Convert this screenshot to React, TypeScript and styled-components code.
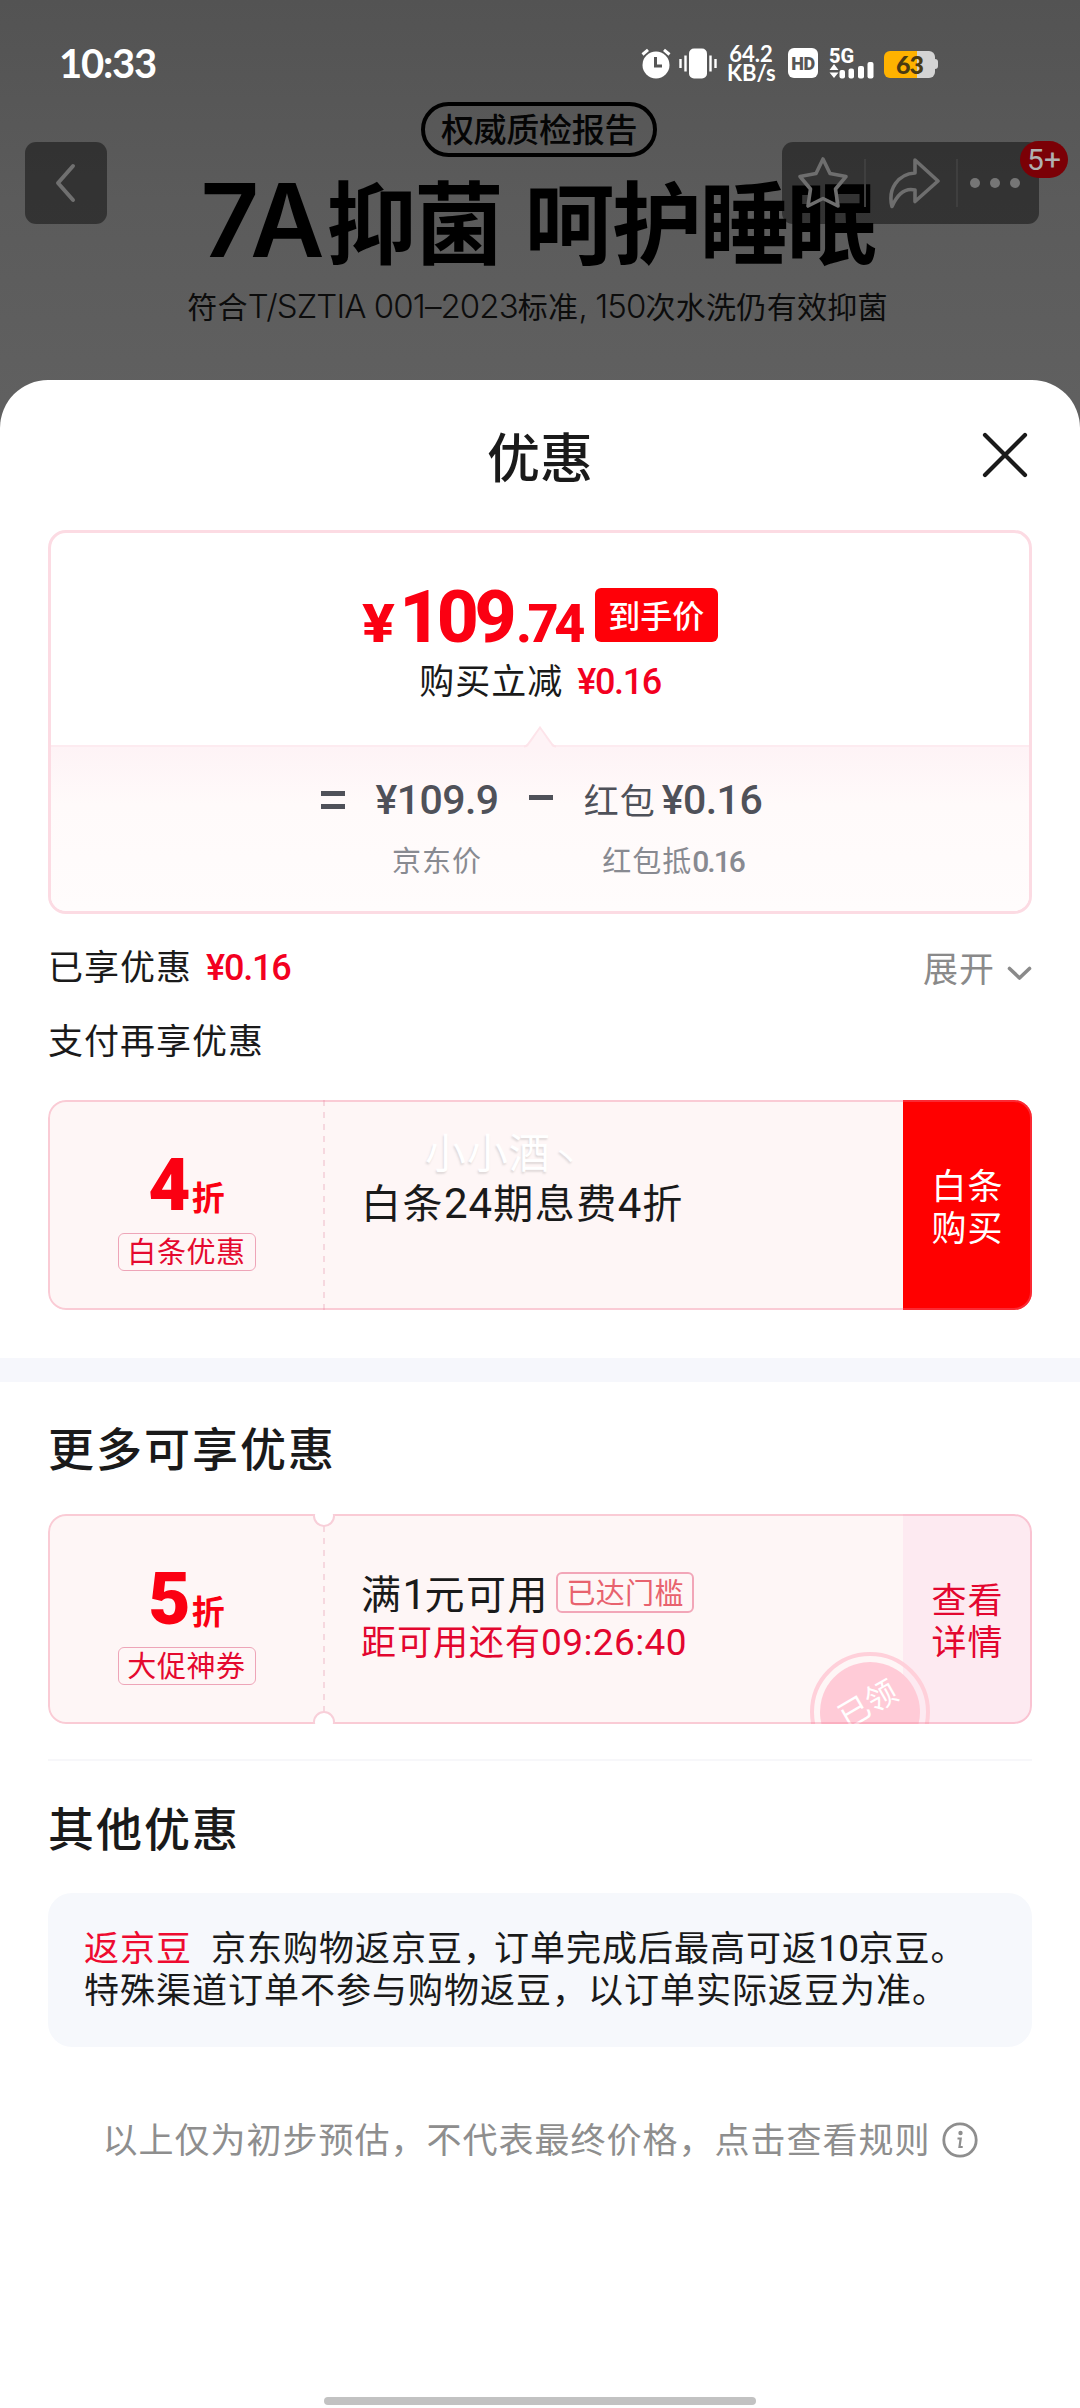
import React from "react";
import styled, { createGlobalStyle, css } from "styled-components";

const CJK = `"Noto Sans CJK SC", "Noto Sans", sans-serif`;

const Global = createGlobalStyle`
  *, *::before, *::after { box-sizing: border-box; }
  html, body { margin: 0; padding: 0; background: #ffffff; }
  body { font-family: ${CJK}; color: #1a1a1a; }
`;

const Page = styled.div`
  width: 1080px;
  height: 2408px;
  display: flex;
  flex-direction: column;
  overflow: hidden;
  background: linear-gradient(#535353 0, #5b5b5b 200px, #606060 400px);
`;

/* Latin digits mixed into Chinese copy */
const Num = styled.span<{ $w?: number; $ls?: number; $size?: number }>`
  font-family: Roboto, ${CJK};
  line-height: 0;
  font-weight: ${(p) => p.$w ?? "inherit"};
  letter-spacing: ${(p) => p.$ls ?? 0}px;
  ${(p) => p.$size && css`font-size: ${p.$size}px;`}
`;

/* ---------- hero ---------- */

const Hero = styled.header`
  position: relative;
  flex: none;
  height: 380px;
  display: flex;
  flex-direction: column;
  align-items: center;
`;

const StatusBar = styled.div`
  align-self: stretch;
  height: 102px;
  padding: 24px 142px 0 59px;
  display: flex;
  align-items: center;
  justify-content: space-between;
  color: #fff;
`;

const Clock = styled.div`
  font: 700 40px/78px Lato, sans-serif;
  letter-spacing: -1.2px;
`;

const StatusIcons = styled.div`
  display: flex;
  align-items: center;
`;

const NetSpeed = styled.div`
  width: 48px;
  margin: 0 13px 0 10px;
  font: 700 22px/19px Lato, sans-serif;
  text-align: center;
  white-space: nowrap;
`;

const HdBadge = styled.div`
  width: 30px;
  height: 30px;
  margin-right: 11px;
  border-radius: 6px;
  background: #fff;
  color: #565656;
  font: 900 18px/31px Roboto, sans-serif;
  letter-spacing: -0.5px;
  text-align: center;
`;

const Battery = styled.div`
  width: 51px;
  height: 27px;
  margin-left: 9px;
  margin-right: 3px;
  margin-top: 3px;
  position: relative;
  border-radius: 6px;
  background: linear-gradient(90deg, #ffb200 64%, #d4d4d4 64%);
  color: #4a3a12;
  font: 900 25px/27px Lato, sans-serif;
  letter-spacing: -1px;
  text-align: center;
  &::after {
    content: "";
    position: absolute;
    right: -3px;
    top: 8px;
    width: 4px;
    height: 10px;
    border-radius: 0 3px 3px 0;
    background: #d4d4d4;
  }
`;

const ReportPill = styled.div`
  width: 236px;
  height: 55px;
  margin-right: 2px;
  border: 4px solid #000;
  border-radius: 28px;
  color: #050505;
  font-size: 33px;
  font-weight: 500;
  line-height: 44px;
  letter-spacing: -0.3px;
  text-align: center;
`;

const HeroTitle = styled.h1`
  margin: 11px 5px 0 0;
  color: #000;
  font-size: 90px;
  line-height: 100px;
  font-weight: 700;
  letter-spacing: -2.5px;
  word-spacing: 5px;
  white-space: nowrap;
`;

const HeroLatin = styled.span<{ $size: number; $w: number; $ls: number }>`
  font-family: Inter, sans-serif;
  font-size: ${(p) => p.$size}px;
  font-weight: ${(p) => p.$w};
  letter-spacing: ${(p) => p.$ls}px;
  line-height: 0;
`;

const HeroNote = styled.p`
  margin: 17px 5px 0 0;
  color: #0c0c0c;
  font-size: 30px;
  line-height: 40px;
  letter-spacing: 0.3px;
  white-space: nowrap;
`;

const NavOverlay = styled.nav`
  position: absolute;
  left: 25px;
  right: 41px;
  top: 142px;
  display: flex;
  justify-content: space-between;
`;

const NavBox = styled.div<{ $wide?: boolean }>`
  position: relative;
  width: ${(p) => (p.$wide ? 257 : 82)}px;
  height: 82px;
  border-radius: 11px;
  background: rgba(0, 0, 0, 0.43);
  display: flex;
  align-items: center;
  justify-content: ${(p) => (p.$wide ? "flex-start" : "center")};
  padding-left: ${(p) => (p.$wide ? 14 : 0)}px;
`;

const NavSplit = styled.i<{ $l: number; $r: number }>`
  width: 2px;
  height: 48px;
  margin: 0 ${(p) => p.$r}px 0 ${(p) => p.$l}px;
  background: #3f3f3f;
`;

const CountBadge = styled.span`
  position: absolute;
  right: -29px;
  top: -1px;
  width: 48px;
  height: 37px;
  border-radius: 19px;
  background: #7b0006;
  color: #b0b0b0;
  font: 400 30px/38px Roboto, sans-serif;
  text-align: center;
`;

/* ---------- sheet ---------- */

const Sheet = styled.main`
  position: relative;
  flex: 1;
  border-radius: 48px 48px 0 0;
  background: #fff;
  display: flex;
  flex-direction: column;
`;

const SheetHeader = styled.div`
  height: 150px;
  padding: 0 51px;
  display: grid;
  grid-template-columns: 48px 1fr 48px;
  align-items: center;
  flex: none;
`;

const SheetTitle = styled.h2`
  grid-column: 2;
  margin: 0;
  font-size: 53px;
  font-weight: 500;
  line-height: 149px;
  text-align: center;
`;

const Section = styled.section`
  padding: 0 48px;
  display: flex;
  flex-direction: column;
`;

const PriceCard = styled.div`
  height: 384px;
  border: 3px solid #fcdbe3;
  border-radius: 18px;
  overflow: hidden;
  display: flex;
  flex-direction: column;
`;

const PriceTop = styled.div`
  height: 212px;
  padding-top: 49px;
  display: flex;
  flex-direction: column;
  align-items: center;
`;

const PriceRow = styled.div`
  height: 70px;
  display: flex;
  align-items: baseline;
  color: #fb0012;
  font-family: Roboto, sans-serif;
  font-weight: 800;
  line-height: 70px;
`;

const PricePart = styled.span<{ $size: number; $ls?: number; $ml?: number; $stretch?: number }>`
  font-size: ${(p) => p.$size}px;
  letter-spacing: ${(p) => p.$ls ?? 0}px;
  margin-left: ${(p) => p.$ml ?? 0}px;
  transform: scaleX(${(p) => p.$stretch ?? 1});
  transform-origin: 0 50%;
`;

const FinalTag = styled.span`
  align-self: flex-start;
  width: 123px;
  height: 54px;
  margin: 6px 0 0 14px;
  border-radius: 6px;
  background: #ff0008;
  color: #fff;
  font-family: ${CJK};
  font-size: 32px;
  font-weight: 500;
  line-height: 53px;
  text-align: center;
`;

const SaveLine = styled.div`
  margin-top: 5px;
  font-size: 35px;
  line-height: 44px;
  letter-spacing: 1px;
  white-space: nowrap;
`;

const RedAmount = styled(Num)`
  color: #f3001f;
  margin-left: 14px;
`;

const Breakdown = styled.div`
  position: relative;
  flex: 1;
  border-top: 2px solid #fdebf0;
  background: linear-gradient(#fef3f6, #fffafa 35%, #fffcfc);
  padding: 27px 0 0 270px;
  display: grid;
  grid-template-columns: 24px 122px 24px 178px;
  column-gap: 31px;
  align-content: start;
`;

const Notch = styled.svg`
  position: absolute;
  left: 469px;
  top: -22px;
`;

const Operator = styled.div<{ $minus?: boolean }>`
  height: ${(p) => (p.$minus ? 5 : 18)}px;
  margin-top: ${(p) => (p.$minus ? 21 : 17)}px;
  border: solid #4f5159;
  border-width: ${(p) => (p.$minus ? "5px 0 0" : "5px 0")};
`;

const Term = styled.div`
  padding-top: 3px;
  display: flex;
  flex-direction: column;
  align-items: center;
  white-space: nowrap;
  color: #4f5159;
`;

const TermValue = styled.div`
  font-size: 35px;
  line-height: 44px;
  letter-spacing: 1px;
  word-spacing: -3px;
`;

const TermLabel = styled.div`
  margin-top: 20px;
  color: #888a91;
  font-size: 29px;
  line-height: 36px;
  letter-spacing: 1px;
`;

const Line = styled.div<{ $mt: number }>`
  margin-top: ${(p) => p.$mt}px;
  height: 50px;
  display: flex;
  justify-content: space-between;
  font-size: 35px;
  line-height: 50px;
  letter-spacing: 1px;
`;

const Expand = styled.div`
  display: flex;
  color: #8a8a8a;
  line-height: 54px;
  svg { margin: 26px 0 0 12px; }
`;

const Heading = styled.h3<{ $mt: number }>`
  margin: ${(p) => p.$mt}px 0 0;
  font-size: 46px;
  font-weight: 500;
  line-height: 60px;
  letter-spacing: 2px;
`;

/* ---------- coupons ---------- */

const Coupon = styled.article<{ $mt: number }>`
  position: relative;
  height: 210px;
  margin-top: ${(p) => p.$mt}px;
  border-radius: 18px;
  overflow: hidden;
  background: #fef6f6;
  display: flex;
  &::after {
    content: "";
    position: absolute;
    inset: 0;
    border: 2px solid rgba(243, 120, 150, 0.34);
    border-radius: 18px;
  }
`;

const CouponValue = styled.div`
  width: 277px;
  padding-top: 55px;
  display: flex;
  flex-direction: column;
  align-items: center;
  background: repeating-linear-gradient(#f6d8df 0 6px, transparent 6px 12px) right / 2px 100% no-repeat;
`;

const Discount = styled.div`
  height: 60px;
  display: flex;
  align-items: baseline;
  color: #fb0012;
  font: 900 73px/60px Roboto, sans-serif;
`;

const DiscountUnit = styled.span`
  font: 700 33px/60px ${CJK};
  margin-left: 1px;
`;

const KindTag = styled.div`
  width: 138px;
  height: 38px;
  margin-top: 18px;
  border: 1px solid #eea5b8;
  border-radius: 6px;
  color: #e5092f;
  font-size: 29px;
  line-height: 32px;
  letter-spacing: 0.6px;
  text-align: center;
  white-space: nowrap;
`;

const CouponBody = styled.div`
  flex: 1;
  padding: 0 0 9px 36px;
  display: flex;
  flex-direction: column;
  justify-content: center;
`;

const CouponTitle = styled.div`
  display: flex;
  align-items: center;
  font-size: 40px;
  line-height: 50px;
  letter-spacing: 1.5px;
  white-space: nowrap;
`;

const Countdown = styled.div`
  color: #e3062f;
  font-size: 35px;
  line-height: 46px;
  letter-spacing: 1px;
  white-space: nowrap;
`;

const ReachedTag = styled.span`
  width: 138px;
  height: 41px;
  margin: 2px 0 0 7px;
  border: 2px solid #f2a6b8;
  border-radius: 6px;
  color: #e8626e;
  font-size: 29px;
  line-height: 34px;
  letter-spacing: 0.3px;
  text-align: center;
`;

const CouponAction = styled.button<{ $primary?: boolean }>`
  width: 129px;
  padding: 0 0 1px;
  border: 0;
  background: ${(p) => (p.$primary ? "#ff0000" : "#fdeaf1")};
  color: ${(p) => (p.$primary ? "#fff" : "#e3062f")};
  font-family: ${CJK};
  font-size: 35px;
  line-height: 42px;
  letter-spacing: 1px;
  text-align: center;
`;

const Punch = styled.i<{ $bottom?: boolean }>`
  position: absolute;
  z-index: 1;
  left: 265px;
  ${(p) => (p.$bottom ? "bottom" : "top")}: -9px;
  width: 22px;
  height: 22px;
  border: 2px solid #f8cfd9;
  border-radius: 50%;
  background: #fff;
`;

const Stamp = styled.div`
  position: absolute;
  left: 762px;
  top: 138px;
  width: 120px;
  height: 120px;
  padding: 6px;
  border: 4px solid #ffd0da;
  border-radius: 50%;
`;

const StampCore = styled.div`
  height: 100px;
  border-radius: 50%;
  background: #ffcbd7;
  color: #fff;
  font-size: 31px;
  line-height: 80px;
  text-indent: 4px;
  text-align: center;
  transform: rotate(-30deg);
`;

const Watermark = styled.span`
  position: absolute;
  left: 377px;
  top: 22px;
  color: #ffffff;
  font-size: 41px;
  line-height: 56px;
  letter-spacing: 1px;
  text-shadow: -1px 2px 2px rgba(120, 120, 120, 0.22);
`;

const WatermarkDot = styled.span`
  font-size: 30px;
`;

const Band = styled.div`
  height: 24px;
  margin: 48px 0 0;
  background: #f6f7fc;
`;

const Rule = styled.div`
  height: 2px;
  margin-top: 35px;
  background: #f7f7fa;
`;

const NoteBox = styled.div`
  height: 154px;
  margin-top: 37px;
  padding: 32px 36px 0;
  border-radius: 24px;
  background: #f6f8fc;
  font-size: 35px;
  line-height: 42px;
  letter-spacing: 1px;
  white-space: nowrap;
`;

const NoteKey = styled.span`
  color: #ee0b30;
  margin-right: 19px;
`;

const TightComma = styled.span`
  letter-spacing: -4px;
`;

const Disclaimer = styled.div`
  margin-top: 66px;
  height: 50px;
  display: flex;
  align-items: center;
  justify-content: center;
  color: #8e8e8e;
  font-size: 35px;
  line-height: 50px;
  letter-spacing: 1px;
  svg { margin: 4px 0 0 11px; }
`;

const HomeBar = styled.div`
  width: 432px;
  height: 8px;
  margin: auto auto 3px;
  border-radius: 4px;
  background: #c2c2c2;
`;

/* ---------- icons ---------- */

const AlarmSvg = styled.svg`
  margin-right: 8px;
`;

const AlarmIcon = () => (
  <AlarmSvg width="30" height="31" viewBox="0 0 30 31">
    <circle cx="15" cy="17" r="13.5" fill="#fff" />
    <path d="M1.5 6.5 7 1.8M28.500 6.500 23 1.800" stroke="#fff" strokeWidth="3" />
    <path d="M14.500 9v9h6.500" stroke="#565656" strokeWidth="3" fill="none" />
  </AlarmSvg>
);

const VibrateIcon = () => (
  <svg width="38" height="31" viewBox="0 0 38 31">
    <rect x="10" y="0.500" width="18" height="30" rx="5" fill="#fff" />
    <path d="M1.500 11v9M6.500 7.500v16M31.500 7.500v16M36.500 11v9" stroke="#fff" strokeWidth="2.400" />
  </svg>
);

const SignalIcon = () => (
  <svg width="46" height="31" viewBox="0 0 46 31">
    <text x="0" y="14.500" fill="#fff" fontFamily="Roboto, sans-serif" fontWeight="800" fontSize="20">5G</text>
    <path d="M0.500 22 5 16l4.500 6zM0.500 24.500 5 30l4.500-5.500z" fill="#fff" />
    <rect x="10.500" y="22" width="5.500" height="8.500" rx="2" fill="#fff" />
    <rect x="19.500" y="20.500" width="5.500" height="10" rx="2" fill="#fff" />
    <rect x="29" y="18" width="6" height="12.500" rx="2" fill="#fff" />
    <rect x="38.500" y="14" width="6" height="16.500" rx="2" fill="#fff" />
  </svg>
);

const BackIcon = () => (
  <svg width="22" height="42" viewBox="0 0 22 42" fill="none" stroke="#707070" strokeWidth="4" strokeLinecap="round" strokeLinejoin="round">
    <path d="M18 4 3 21l15 17" />
  </svg>
);

const StarIcon = () => (
  <svg width="54" height="54" viewBox="0 0 54 54" fill="none" stroke="#6e6e6e" strokeWidth="3.600" strokeLinejoin="round">
    <path d="M27 3 34 17.500 50 20.500 39.500 33 42 50 27 42.500 12 50 14.500 33 4 20.500 20 17.500Z" />
  </svg>
);

const ShareIcon = () => (
  <svg width="54" height="54" viewBox="0 0 54 54" fill="none" stroke="#6e6e6e" strokeWidth="3.600" strokeLinejoin="round">
    <path d="M28 4 51 25 28 45.500V34C18 31.500 11 37 5 50.500 0.500 33 11 18 28 17Z" />
  </svg>
);

const DotsIcon = () => (
  <svg width="52" height="12" viewBox="0 0 52 12" fill="#767676">
    <circle cx="6" cy="6" r="5" />
    <circle cx="26" cy="6" r="5" />
    <circle cx="46" cy="6" r="5" />
  </svg>
);

const CloseIcon = () => (
  <svg width="48" height="48" viewBox="0 0 48 48" stroke="#1a1a1a" strokeWidth="4.200" strokeLinecap="round">
    <path d="M4 4 44 44M44 4 4 44" />
  </svg>
);

const ChevronDown = () => (
  <svg width="25" height="15" viewBox="0 0 25 15" fill="none" stroke="#8a8a8a" strokeWidth="3.600" strokeLinecap="round" strokeLinejoin="round">
    <path d="M2.500 2.500 12.500 12 22.500 2.500" />
  </svg>
);

const InfoIcon = () => (
  <svg width="36" height="36" viewBox="0 0 36 36" fill="none" stroke="#8e8e8e">
    <circle cx="18" cy="18" r="16.200" strokeWidth="2.800" />
    <circle cx="18.500" cy="11" r="2.200" fill="#8e8e8e" stroke="none" />
    <path d="M15.500 16.500h3.200l-1.200 8.500h3.200" strokeWidth="2.200" />
  </svg>
);

export default function App() {
  return (
    <Page>
      <Global />
      <Hero>
        <StatusBar>
          <Clock>10:33</Clock>
          <StatusIcons>
            <AlarmIcon />
            <VibrateIcon />
            <NetSpeed>64.2<br />KB/s</NetSpeed>
            <HdBadge>HD</HdBadge>
            <SignalIcon />
            <Battery>63</Battery>
          </StatusIcons>
        </StatusBar>
        <ReportPill>权威质检报告</ReportPill>
        <HeroTitle>
          <HeroLatin $size={102} $w={600} $ls={2}>7A</HeroLatin>抑菌 呵护睡眠
        </HeroTitle>
        <HeroNote>
          符合<HeroLatin $size={33} $w={350} $ls={-0.9}>T/SZTIA 001–2023</HeroLatin>标准
          <HeroLatin $size={33} $w={350} $ls={-0.9}>, 150</HeroLatin>次水洗仍有效抑菌
        </HeroNote>
        <NavOverlay>
          <NavBox><BackIcon /></NavBox>
          <NavBox $wide>
            <StarIcon />
            <NavSplit $l={14} $r={21} />
            <ShareIcon />
            <NavSplit $l={15} $r={11} />
            <DotsIcon />
            <CountBadge>5+</CountBadge>
          </NavBox>
        </NavOverlay>
      </Hero>

      <Sheet>
        <SheetHeader>
          <SheetTitle>优惠</SheetTitle>
          <CloseIcon />
        </SheetHeader>

        <Section>
          <PriceCard>
            <PriceTop>
              <PriceRow>
                <PricePart $size={54} $stretch={1.13}>¥</PricePart>
                <PricePart $size={73} $ls={-4.5} $ml={8}>109</PricePart>
                <PricePart $size={54} $ls={-4.5} $ml={4}>.74</PricePart>
                <FinalTag>到手价</FinalTag>
              </PriceRow>
              <SaveLine>
                购买立减<RedAmount $w={500} $size={36} $ls={-1.4}>¥0.16</RedAmount>
              </SaveLine>
            </PriceTop>
            <Breakdown>
              <Notch width="40" height="24" viewBox="0 0 40 24">
                <path d="M5 24 C8 22 8 21 20 3 C32 21 32 22 35 24Z" fill="#fef3f6" />
                <path d="M4 21.500 C8 21 8 19 20 2.500 C32 19 32 21 36 21.500" fill="none" stroke="#fde4ea" strokeWidth="2" />
              </Notch>
              <Operator />
              <Term>
                <TermValue><Num $w={500} $size={41} $ls={-0.6}>¥109.9</Num></TermValue>
                <TermLabel>京东价</TermLabel>
              </Term>
              <Operator $minus />
              <Term>
                <TermValue>红包 <Num $w={500} $size={41} $ls={-0.5}>¥0.16</Num></TermValue>
                <TermLabel>红包抵<Num $w={500} $size={30} $ls={-2}>0.16</Num></TermLabel>
              </Term>
            </Breakdown>
          </PriceCard>

          <Line $mt={26}>
            <div>已享优惠<RedAmount $w={500} $size={36} $ls={-1.2}>¥0.16</RedAmount></div>
            <Expand>展开<ChevronDown /></Expand>
          </Line>
          <Line $mt={24}>支付再享优惠</Line>

          <Coupon $mt={36}>
            <CouponValue>
              <Discount>4<DiscountUnit>折</DiscountUnit></Discount>
              <KindTag>白条优惠</KindTag>
            </CouponValue>
            <CouponBody>
              <CouponTitle>
                <span>白条<Num $ls={1} $size={42}>24</Num>期息费<Num $ls={1} $size={42}>4</Num>折</span>
              </CouponTitle>
            </CouponBody>
            <CouponAction $primary>白条<br />购买</CouponAction>
            <Watermark>小小酒<WatermarkDot>丶</WatermarkDot></Watermark>
          </Coupon>
        </Section>

        <Band />

        <Section>
          <Heading $mt={34}>更多可享优惠</Heading>
          <Coupon $mt={38}>
            <CouponValue>
              <Discount>5<DiscountUnit>折</DiscountUnit></Discount>
              <KindTag>大促神券</KindTag>
            </CouponValue>
            <CouponBody>
              <CouponTitle>
                <span>满<Num $ls={-1.5} $size={42}>1</Num>元可用</span>
                <ReachedTag>已达门槛</ReachedTag>
              </CouponTitle>
              <Countdown>距可用还有<Num $ls={0.4} $size={37}>09:26:40</Num></Countdown>
            </CouponBody>
            <CouponAction>查看<br />详情</CouponAction>
            <Punch />
            <Punch $bottom />
            <Stamp><StampCore>已领</StampCore></Stamp>
          </Coupon>
          <Rule />
          <Heading $mt={35}>其他优惠</Heading>
          <NoteBox>
            <NoteKey>返京豆</NoteKey>京东购物返京豆<TightComma>，</TightComma>订单完成后最高可返<Num $ls={-0.6} $size={37}>10</Num>京豆。
            <br />
            特殊渠道订单不参与购物返豆，以订单实际返豆为准。
          </NoteBox>
          <Disclaimer>以上仅为初步预估，不代表最终价格，点击查看规则<InfoIcon /></Disclaimer>
        </Section>
        <HomeBar />
      </Sheet>
    </Page>
  );
}
